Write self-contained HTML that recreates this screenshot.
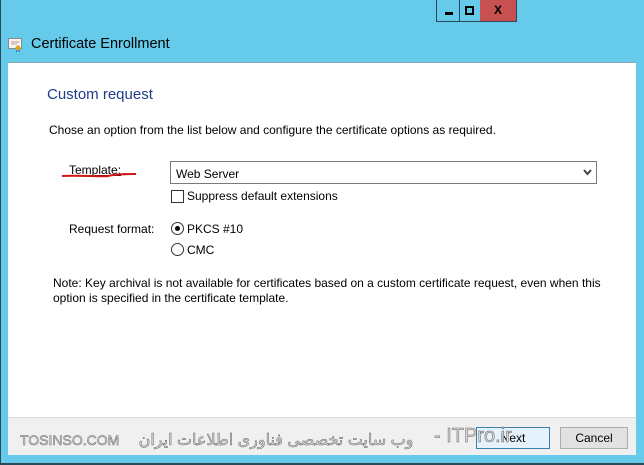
<!DOCTYPE html>
<html><head><meta charset="utf-8"><style>
*{margin:0;padding:0;box-sizing:border-box}
body{width:644px;height:465px;overflow:hidden;background:#66cbea;font-family:"Liberation Sans","DejaVu Sans",sans-serif;position:relative;font-size:12px;color:#000}
.abs{position:absolute}
.frame{left:0;top:0;width:644px;height:465px;border-left:1px solid #2a4a5a;border-bottom:2px solid #2a4a5a}
.btn{top:0;height:22px;border:1px solid #2a4a5a;border-top:none}
.white{left:8px;top:62px;width:628px;height:355px;background:#fff;border-top:1px solid #8aa8b8}
.foot{left:8px;top:417px;width:628px;height:38px;background:#f0f0f0;border-top:1px solid #dcdcdc}
.pb{height:22px;border:1px solid #adadad;background:#e1e1e1;text-align:center;line-height:20px;font-size:12px}
.wm{top:430px;font-size:16px;color:#d8d8d8;-webkit-text-stroke:0.5px #666;white-space:nowrap}
</style></head><body>
<div class="abs frame"></div>
<div class="abs btn" style="left:436px;width:24px"><div class="abs" style="left:8px;top:12px;width:8px;height:3px;background:#000"></div></div>
<div class="abs btn" style="left:459px;width:22px;border-left:none"><div class="abs" style="left:6px;top:6px;width:9px;height:9px;border:2px solid #000"></div></div>
<div class="abs btn" style="left:480px;width:37px;background:#c75050;border-left:none;text-align:center;font-weight:bold;font-size:12px;line-height:21px">X</div>
<svg class="abs" style="left:8px;top:38px" width="16" height="14" viewBox="0 0 16 14"><rect x="0.5" y="0.5" width="13" height="10" fill="#f4f4f4" stroke="#888"/><line x1="3" y1="4" x2="11" y2="4" stroke="#c88"/><line x1="3" y1="6" x2="9" y2="6" stroke="#aaa"/><circle cx="10" cy="10" r="2.5" fill="#e0a020"/><path d="M9 12 L8.5 14 M11 12 L11.5 14" stroke="#3060c0"/></svg>
<div class="abs" style="left:31px;top:36px;font-size:14.5px;color:#000">Certificate Enrollment</div>
<div class="abs white"></div>
<div class="abs" style="left:47px;top:86px;font-size:15px;color:#1e3c8c">Custom request</div>
<div class="abs" style="left:49px;top:123px">Chose an option from the list below and configure the certificate options as required.</div>
<div class="abs" style="left:69px;top:163px;text-decoration:underline">Template:</div>
<svg class="abs" style="left:60px;top:170px" width="80" height="10"><path d="M2 6 C20 5 40 7 48 6 C56 4 66 4 76 4" stroke="#d01818" stroke-width="2" fill="none"/></svg>
<div class="abs" style="left:170px;top:161px;width:427px;height:23px;border:1px solid #7a7a7a;background:#fff;padding:5px 0 0 5px">Web Server</div>
<svg class="abs" style="left:583px;top:169px" width="9" height="7"><path d="M1 1 L4.5 5 L8 1" stroke="#444" stroke-width="2" fill="none"/></svg>
<div class="abs" style="left:171px;top:190px;width:13px;height:13px;border:1px solid #333;background:#fff"></div>
<div class="abs" style="left:187px;top:189px">Suppress default extensions</div>
<div class="abs" style="left:69px;top:222px">Request format:</div>
<div class="abs" style="left:171px;top:222px;width:13px;height:13px;border:1px solid #333;border-radius:50%;background:#fff"><div class="abs" style="left:3px;top:3px;width:5px;height:5px;border-radius:50%;background:#000"></div></div>
<div class="abs" style="left:187px;top:222px">PKCS #10</div>
<div class="abs" style="left:171px;top:243px;width:13px;height:13px;border:1px solid #333;border-radius:50%;background:#fff"></div>
<div class="abs" style="left:187px;top:243px">CMC</div>
<div class="abs" style="left:53px;top:276px;width:560px;line-height:15px">Note: Key archival is not available for certificates based on a custom certificate request, even when this option is specified in the certificate template.</div>
<div class="abs foot"></div>
<div class="abs pb" style="left:476px;top:427px;width:74px;border-color:#3c7fb1;background:#e5f1fb">Next</div>
<div class="abs pb" style="left:560px;top:427px;width:68px">Cancel</div>
<div class="abs wm" style="left:20px;font-size:14px;top:432px">TOSINSO.COM</div>
<div class="abs wm" dir="rtl" style="left:120px;width:312px;text-align:center">وب سایت تخصصی فناوری اطلاعات ایران</div>
<div class="abs wm" style="left:434px;font-size:20px;top:425px">- ITPro.ir</div>
</body></html>
